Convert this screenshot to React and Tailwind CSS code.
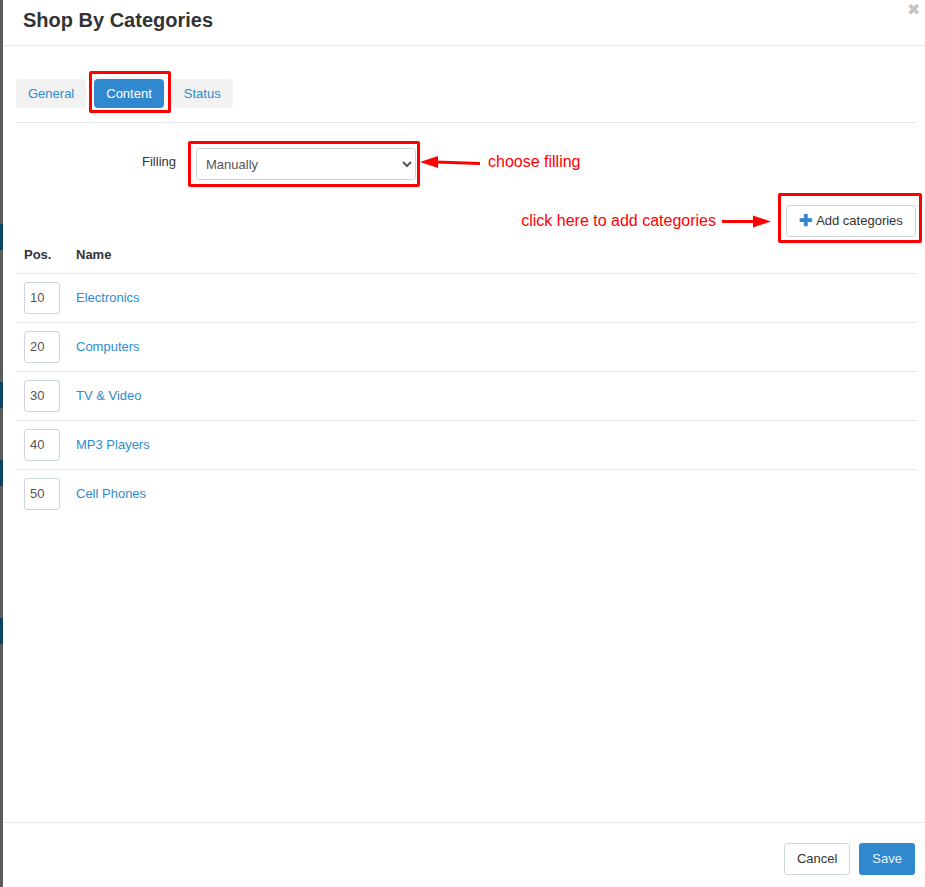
import React from "react";

const categories = [
    { pos: 10, name: "Electronics" },
    { pos: 20, name: "Computers" },
    { pos: 30, name: "TV & Video" },
    { pos: 40, name: "MP3 Players" },
    { pos: 50, name: "Cell Phones" },
];

// flecha roja de anotación, con la punta a la izquierda o a la derecha
function ArrowLeft() {
    return (
        <svg width="62" height="14" viewBox="0 0 62 14" className="shrink-0">
            <line x1="16" y1="6" x2="60" y2="7.5" stroke="#ff0000" strokeWidth="3" />
            <polygon points="0,6 18,0 18,12" fill="#ff0000" />
        </svg>
    );
}

function ArrowRight() {
    return (
        <svg width="49" height="14" viewBox="0 0 49 14" className="shrink-0">
            <line x1="0" y1="7.5" x2="34" y2="7.5" stroke="#ff0000" strokeWidth="3" />
            <polygon points="49,7.5 31,1.5 31,13.5" fill="#ff0000" />
        </svg>
    );
}

function App() {
    return (
        <div className="flex h-screen w-full overflow-hidden bg-white font-['Liberation_Sans',Arial,sans-serif] text-[13px] text-[#333]">
            {/* fondo de la página detrás del modal */}
            <div className="flex w-[3px] shrink-0 flex-col bg-[#5b5b5b]">
                <div className="h-[224px]" />
                <div className="h-[26px] bg-[#0d4466]" />
                <div className="h-[132px]" />
                <div className="h-[26px] bg-[#0d4466]" />
                <div className="h-[52px]" />
                <div className="h-[26px] bg-[#0d4466]" />
                <div className="h-[132px]" />
                <div className="h-[26px] bg-[#0d4466]" />
            </div>

            <div className="flex min-w-0 flex-1 flex-col">
                {/* Encabezado */}
                <div className="flex h-[46px] shrink-0 items-start justify-between border-b border-[#e5e5e5] pl-[20px] pr-[5px]">
                    <h3 className="pt-[8px] text-[20px] font-bold leading-[24px] text-[#333]">Shop By Categories</h3>
                    <span className="pt-[1px] text-[16px] leading-[18px] text-[#c4c4c4]">✖</span>
                </div>

                {/* Cuerpo */}
                <div className="flex flex-1 flex-col pl-[13px] pr-[9px] pt-[33px]">
                    <div className="flex gap-[8px] border-b border-[#e3e6ea] pb-[14px]">
                        <button className="h-[29px] rounded-[4px] bg-[#f2f2f2] px-[12px] text-[#2f8bd0]">General</button>
                        <div className="relative">
                            <button className="h-[29px] rounded-[4px] bg-[#3089cf] px-[12px] text-white">Content</button>
                            <div className="absolute -bottom-[5px] -left-[5px] -right-[7px] -top-[8px] rounded-[2px] border-[3px] border-[#ff0000]" />
                        </div>
                        <button className="h-[29px] rounded-[4px] bg-[#f2f2f2] px-[12px] text-[#2f8bd0]">Status</button>
                    </div>

                    {/* Filling */}
                    <div className="mt-[25px] flex items-center">
                        <label className="w-[160px] text-right leading-[16px] text-[#333] -translate-y-[2px]">Filling</label>
                        <div className="relative ml-[20px]">
                            <select
                                defaultValue="manual"
                                className="h-[32px] w-[220px] rounded-[3px] border border-[#ccd6e0] bg-white pl-[5px] text-[13px] text-[#555]"
                            >
                                <option value="manual">Manually</option>
                            </select>
                            <div className="absolute -bottom-[7px] -left-[8px] -right-[4px] -top-[7px] rounded-[2px] border-[3px] border-[#ff0000]" />
                        </div>
                        <div className="ml-[4px] -translate-y-[1px]">
                            <ArrowLeft />
                        </div>
                        <span className="ml-[6px] text-[16px] text-[#ff0000] -translate-y-[2px]">choose filling</span>
                    </div>

                    {/* Agregar categorías */}
                    <div className="mt-[25px] flex items-center justify-end">
                        <span className="text-[16px] text-[#ff0000]">click here to add categories</span>
                        <div className="ml-[6px]">
                            <ArrowRight />
                        </div>
                        <div className="relative ml-[15px]">
                            <button className="flex h-[32px] w-[130px] items-center justify-center gap-[4px] rounded-[3px] border border-[#ccd6e0] bg-white text-[#333]">
                                <span className="text-[16px] font-bold leading-none text-[#3089cf]">✚</span>
                                Add categories
                            </button>
                            <div className="absolute -bottom-[6px] -left-[8px] -right-[6px] -top-[12px] rounded-[2px] border-[3px] border-[#ff0000]" />
                        </div>
                    </div>

                    {/* Tabla de categorías */}
                    <table className="w-full border-collapse">
                        <thead>
                            <tr className="h-[36px] text-left">
                                <th className="w-[60px] pl-[8px] font-bold">Pos.</th>
                                <th className="font-bold">Name</th>
                            </tr>
                        </thead>
                        <tbody>
                            {categories.map((cat) => (
                                <tr key={cat.pos} className="h-[49px] border-t border-[#e5e5e5]">
                                    <td className="pl-[8px]">
                                        <input
                                            defaultValue={cat.pos}
                                            className="h-[32px] w-[36px] rounded-[3px] border border-[#ccd6e0] px-[5px] text-[13px] text-[#555]"
                                        />
                                    </td>
                                    <td>
                                        <a href="#" className="text-[#2f8bd0]">{cat.name}</a>
                                    </td>
                                </tr>
                            ))}
                        </tbody>
                    </table>
                </div>

                {/* Pie */}
                <div className="flex h-[65px] shrink-0 items-start justify-end gap-[9px] border-t border-[#e5e5e5] pr-[10px] pt-[20px]">
                    <button className="h-[32px] rounded-[3px] border border-[#ccd6e0] bg-white px-[12px] text-[#333]">Cancel</button>
                    <button className="h-[32px] rounded-[3px] bg-[#3089cf] px-[13px] text-[#e8f2fb]">Save</button>
                </div>
            </div>
        </div>
    );
}

export default App;
